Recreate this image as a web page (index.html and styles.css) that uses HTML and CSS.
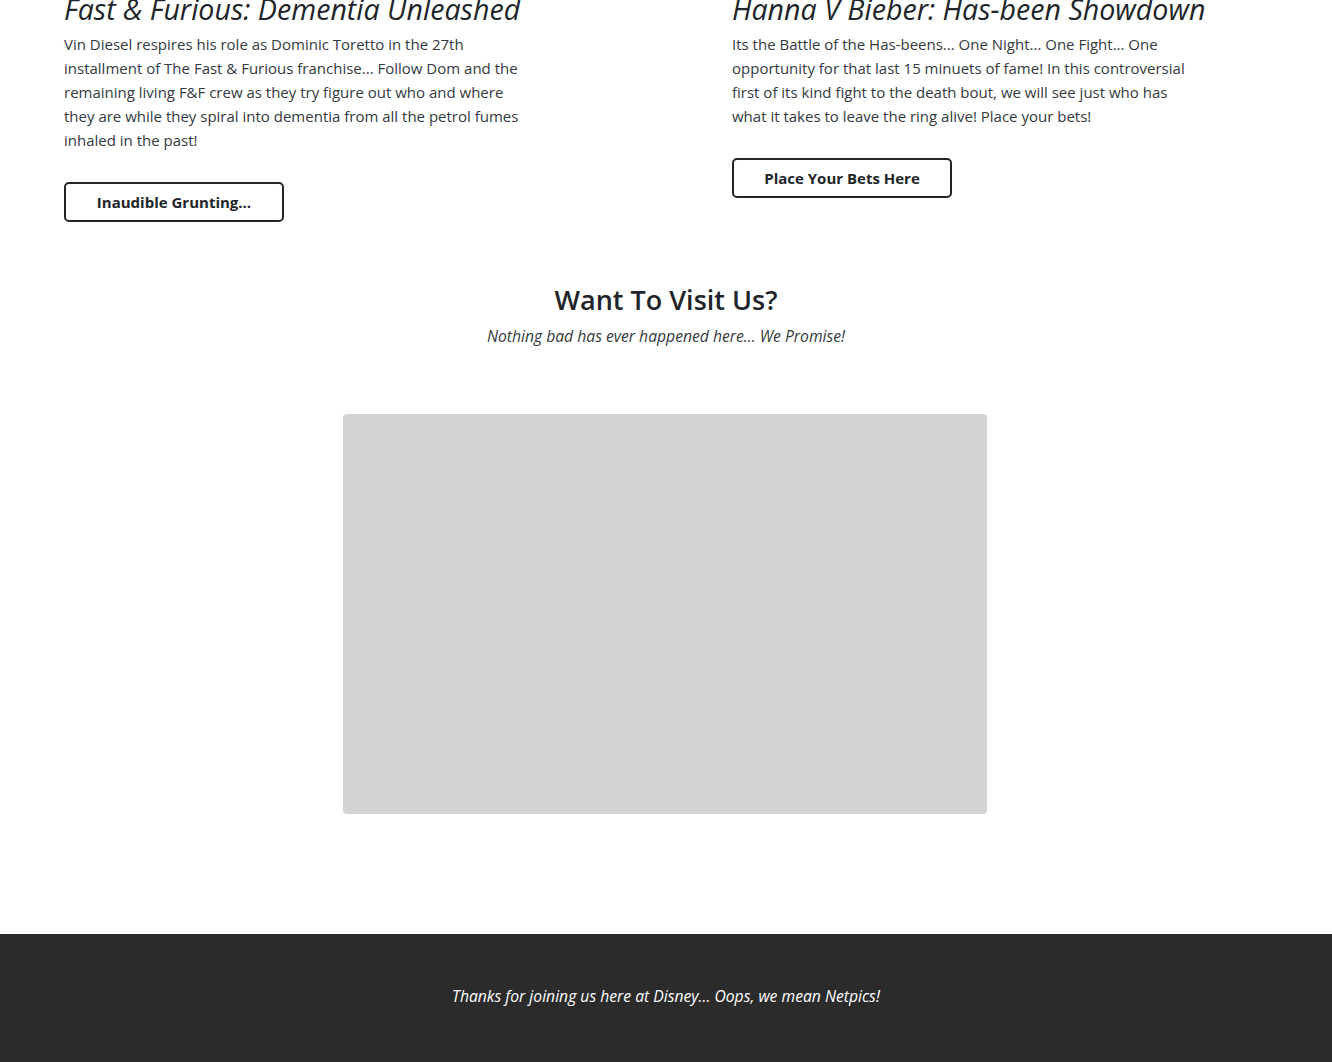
FILE: index.html
```html
<!DOCTYPE html>
<html lang="en">
<head>
<meta charset="utf-8">
<title>Netpics</title>
<link rel="stylesheet" href="styles.css">
</head>
<body>
<main class="page">
  <section class="features">
    <article class="feature feature-left">
      <h2 class="feature-title">Fast &amp; Furious: Dementia Unleashed</h2>
      <p class="feature-text">Vin Diesel respires his role as Dominic Toretto in the 27th installment of The Fast &amp; Furious franchise... Follow Dom and the remaining living F&amp;F crew as they try figure out who and where they are while they spiral into dementia from all the petrol fumes inhaled in the past!</p>
      <a class="btn-outline" href="#">Inaudible Grunting...</a>
    </article>
    <article class="feature feature-right">
      <h2 class="feature-title">Hanna V Bieber: Has-been Showdown</h2>
      <p class="feature-text">Its the Battle of the Has-beens... One Night... One Fight... One opportunity for that last 15 minuets of fame! In this controversial first of its kind fight to the death bout, we will see just who has what it takes to leave the ring alive! Place your bets!</p>
      <a class="btn-outline" href="#">Place Your Bets Here</a>
    </article>
  </section>

  <section class="visit">
    <h2 class="visit-title">Want To Visit Us?</h2>
    <p class="visit-sub">Nothing bad has ever happened here... We Promise!</p>
    <div class="map"></div>
  </section>
</main>
<footer class="footer">
  <p class="footer-text">Thanks for joining us here at Disney... Oops, we mean Netpics!</p>
</footer>
</body>
</html>
```

FILE: styles.css
```css
* { box-sizing: border-box; }

html, body {
  margin: 0;
  padding: 0;
  background: #ffffff;
}

body {
  font-family: "Open Sans", "Noto Sans", sans-serif;
  font-size: 15px;
  line-height: 24px;
  color: #343a40;
}

.page {
  margin-top: -10px;
}

.features {
  display: flex;
}

.feature {
  width: 50%;
  padding-right: 64px;
}

.feature-left { padding-left: 64px; }
.feature-right { padding-left: 66px; }

.feature-title {
  margin: 0 0 4px;
  font-size: 28.6px;
  line-height: 38px;
  font-style: italic;
  font-weight: 500;
  color: #212529;
  white-space: nowrap;
}

.feature-text {
  margin: 0 0 30px;
  max-width: 472px;
}

.btn-outline {
  display: flex;
  align-items: center;
  justify-content: center;
  width: 220px;
  height: 40px;
  border: 2px solid #212529;
  border-radius: 5px;
  color: #212529;
  font-weight: 700;
  font-size: 15px;
  text-decoration: none;
}

.visit {
  padding-top: 61px;
  padding-bottom: 120px;
  display: flex;
  flex-direction: column;
  align-items: center;
}

.visit-title {
  margin: 0;
  font-size: 27px;
  line-height: 34px;
  font-weight: 600;
  color: #212529;
}

.visit-sub {
  margin: 7px 0 0;
  font-size: 15.7px;
  font-style: italic;
  color: #343a40;
}

.map {
  margin-top: 66px;
  margin-right: 2px;
  width: 644px;
  height: 400px;
  background: #d3d3d3;
  border-radius: 4px;
}

.footer {
  background: #2b2b2b;
  padding: 50px 0 60px;
  text-align: center;
}

.footer-text {
  margin: 0;
  font-size: 15.7px;
  color: #ffffff;
  font-style: italic;
}
```
